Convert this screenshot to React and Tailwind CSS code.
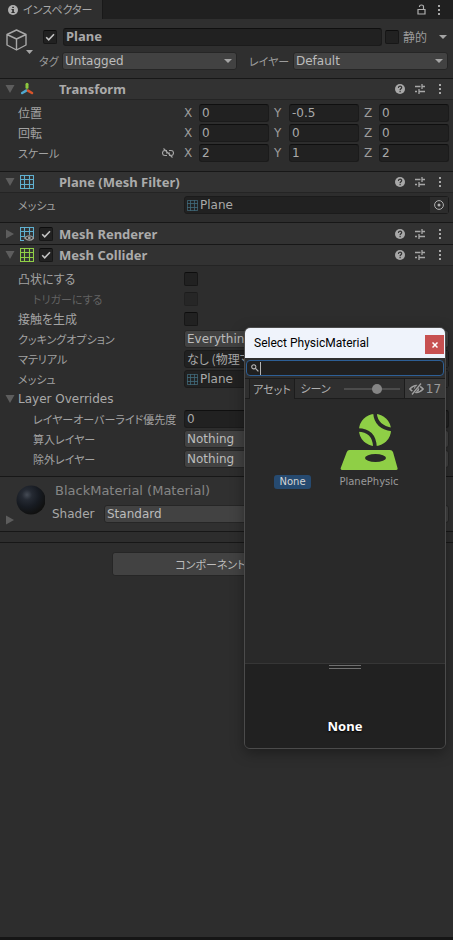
import React from 'react';

const FONT = "font-['DejaVu_Sans','Noto_Sans_CJK_JP',sans-serif]";
const BOLD = "font-['Noto_Sans','Noto_Sans_CJK_JP',sans-serif] text-[13px] font-bold";
const JP = "font-['Noto_Sans_CJK_JP',sans-serif] [font-feature-settings:'palt']";
const FIELD = 'h-[18px] min-w-0 rounded-[3px] border border-[#1b1b1b] border-t-[#0f0f0f] bg-[#212121] text-[#a9a9a9] outline-none';

function Triangle({ right = false, small = false, className = '' }) {
  if (small) {
    return (
      <svg viewBox="0 0 8 4" className={`h-1 w-2 shrink-0 ${className}`} aria-hidden="true">
        <path d="M0 0h8L4 4z" fill="#a5a5a5" />
      </svg>
    );
  }
  return (
    <svg viewBox="0 0 10 10" className={`h-[10px] w-[10px] shrink-0 ${className}`} aria-hidden="true">
      <path d={right ? 'M1 .5v9L9 5z' : 'M.5 1h9L5 9z'} fill="#5d5d5d" />
    </svg>
  );
}

function Check({ id, label, checked = false, dim = false }) {
  return (
    <span className={`relative block h-[14px] w-[14px] shrink-0 ${dim ? 'opacity-50' : ''}`}>
      <input
        id={id}
        type="checkbox"
        aria-label={label}
        defaultChecked={checked}
        disabled={dim}
        className="peer block h-[14px] w-[14px] appearance-none rounded-[2px] border border-[#171717] border-t-[#0d0d0d] bg-[#212121]"
      />
      <svg viewBox="0 0 14 14" className="pointer-events-none absolute inset-0 hidden h-[14px] w-[14px] peer-checked:block" aria-hidden="true">
        <path d="M3.2 7.3l2.5 2.5 5.3-5.6" fill="none" stroke="#c4c4c4" strokeWidth="1.6" />
      </svg>
    </span>
  );
}

function Select({ id, label, value, className = '' }) {
  return (
    <span className={`relative block min-w-0 ${className}`}>
      <select
        id={id}
        aria-label={label}
        defaultValue={value}
        className="block h-[18px] w-full appearance-none rounded-[3px] border border-[#262626] bg-[#424242] pr-4 pl-[2px] text-[12px] leading-[16px] text-[#bcbcbc] outline-none"
      >
        <option>{value}</option>
      </select>
      <Triangle small className="pointer-events-none absolute top-[7px] right-[5px]" />
    </span>
  );
}

function Dots() {
  return (
    <svg viewBox="0 0 4 12" className="h-3 w-1" aria-hidden="true">
      <path d="M1 1h2v2H1zM1 5h2v2H1zM1 9h2v2H1z" fill="#a8a8a8" />
    </svg>
  );
}

function GridIcon({ color, eye = false, small = false }) {
  return (
    <svg viewBox="0 0 14 14" className={small ? 'h-[11px] w-[11px] shrink-0 opacity-50' : 'h-[14px] w-[14px] shrink-0'} aria-hidden="true">
      <path d="M.5.5h13v13H.5zM4.5 0v14M9.5 0v14M0 4.5h14M0 9.5h14" fill="none" stroke={color} strokeWidth="1.1" />
      {eye && (
        <g>
          <path d="M4 14V10.500Q9.500 5 14 10.500V14z" fill="#323232" />
          <path d="M4.700 11Q9.300 6.500 13.900 11Q9.300 15.500 4.700 11z" fill="#323232" stroke="#a0a0a0" strokeWidth="1.100" />
          <circle cx="9.3" cy="11" r="1.400" fill="#a0a0a0" />
        </g>
      )}
    </svg>
  );
}

function TransformIcon() {
  return (
    <svg viewBox="0 0 14 14" className="h-[14px] w-[14px] shrink-0" aria-hidden="true">
      <path d="M7 2.200v3.300" stroke="#8dc63f" strokeWidth="3" strokeLinecap="round" />
      <path d="M7 6v3" stroke="#5f8f35" strokeWidth="1" />
      <path d="M6.200 8.600L2.200 11" stroke="#4fa8cf" strokeWidth="2.600" strokeLinecap="round" />
      <path d="M8 8.600l4 2.400" stroke="#d8542b" strokeWidth="2.600" strokeLinecap="round" />
    </svg>
  );
}

function Header({ icon, title, open = true, check = false, rule = true }) {
  return (
    <header className={`flex h-[21px] items-center border-[#242424] bg-[#323232] pr-[11px] pl-[5px] ${rule ? 'border-b' : ''}`}>
      <Triangle right={!open} />
      <span className="ml-[5px] flex">{icon}</span>
      <span className="ml-[5px] flex w-5">{check && <Check label={title} checked />}</span>
      <h2 className={`min-w-0 flex-1 truncate leading-5 text-[#ababab] ${BOLD}`}>{title}</h2>
      <button type="button" aria-label="Help" className="flex">
        <svg viewBox="0 0 10 10" className="h-[10px] w-[10px]" aria-hidden="true">
          <circle cx="5" cy="5" r="5" fill="#a8a8a8" />
          <path d="M3.400 3.900c0-2.400 3.300-2.300 3.300-.3C6.700 4.900 5.100 4.800 5.100 6.200M5.100 7v1.200" fill="none" stroke="#323232" strokeWidth="1.200" />
        </svg>
      </button>
      <button type="button" aria-label="Presets" className="ml-[10px] flex">
        <svg viewBox="0 0 10 10" className="h-[10px] w-[10px]" aria-hidden="true">
          <path d="M0 2.500h5.500M7 2.500h3M7 0v5M0 7.500h2M4 7.500h6M4 5v5" fill="none" stroke="#a8a8a8" strokeWidth="1.300" />
        </svg>
      </button>
      <button type="button" aria-label="Menu" className="ml-[13px] flex"><Dots /></button>
    </header>
  );
}

function Row({ id, label, kana = false, indent = false, dim = false, extra, children }) {
  return (
    <div className="flex h-5 items-center pr-1">
      <span className={`flex w-[184px] shrink-0 items-center justify-between ${extra ? 'pr-[10px]' : ''} ${indent ? 'pl-[33px]' : 'pl-[18px]'}`}>
        <label htmlFor={id} className={`${JP} ${kana ? 'text-[11px]' : 'text-[12px]'} leading-5 whitespace-nowrap ${dim ? 'text-[#626262]' : 'text-[#a3a3a3]'}`}>{label}</label>
        {extra}
      </span>
      <div className="flex min-w-0 flex-1 items-center gap-[5px]">{children}</div>
    </div>
  );
}

function Vector({ name, values }) {
  return ['X', 'Y', 'Z'].map((axis, i) => (
    <label key={axis} className="flex min-w-0 flex-1 items-center text-[12px] text-[#9c9c9c]">
      <span className="w-[15px] shrink-0">{axis}</span>
      <input id={i === 0 ? name : undefined} defaultValue={values[i]} className={`${FIELD} w-full flex-1 px-[2px] text-[12px]`} />
    </label>
  ));
}

function ObjectField({ id, value, icon = true }) {
  return (
    <span className={`flex min-w-0 flex-1 items-center rounded-[3px] border border-[#1b1b1b] bg-[#212121] ${icon ? 'pl-[2px]' : ''}`}>
      {icon && <GridIcon color="#5fb0d0" small />}
      <input id={id} readOnly defaultValue={value} className={`h-4 w-full min-w-0 flex-1 bg-transparent text-[12px] text-[#a9a9a9] outline-none pl-[2px] ${icon ? '' : JP}`} />
      <button type="button" aria-label="Pick object" className="flex h-4 w-[18px] shrink-0 items-center justify-center bg-[#2c2c2c]">
        <svg viewBox="0 0 10 10" className="h-[10px] w-[10px]" aria-hidden="true">
          <circle cx="5" cy="5" r="4.400" fill="none" stroke="#b0b0b0" />
          <circle cx="5" cy="5" r="1.500" fill="#b0b0b0" />
        </svg>
      </button>
    </span>
  );
}

function Picker() {
  return (
    <section role="dialog" aria-label="Select PhysicMaterial" className="absolute top-[327px] left-[244px] flex h-[422px] w-[202px] flex-col overflow-hidden rounded-[6px] border border-[#4b4b4b] bg-[#292929] shadow-[0_4px_14px_rgba(0,0,0,0.35)]">
      <div className="flex h-[30px] shrink-0 items-center bg-[#eff3fb] pr-px pl-[9px]">
        <h2 className="flex-1 font-['Roboto',sans-serif] text-[12px] whitespace-nowrap text-black">Select PhysicMaterial</h2>
        <button type="button" aria-label="Close" className="mt-[3px] flex h-[19px] w-[19px] items-center justify-center bg-[#c75050]">
          <svg viewBox="0 0 6 6" className="h-[6px] w-[6px]" aria-hidden="true">
            <path d="M.5.5l5 5M5.500.5l-5 5" stroke="#fff" strokeWidth="1.500" />
          </svg>
        </button>
      </div>
      <div className="h-5 shrink-0 bg-[#2f2f2f] px-[1px] pt-[2px]">
        <div className="flex h-4 items-center rounded-[4px] border border-[#2d5f96] bg-[#202020] pl-1">
          <svg viewBox="0 0 8 8" className="h-2 w-2 shrink-0" aria-hidden="true">
            <circle cx="2.800" cy="2.800" r="2.100" fill="none" stroke="#b5b5b5" strokeWidth="1.100" />
            <path d="M4.400 4.400L7.400 7.400" stroke="#b5b5b5" strokeWidth="1.300" />
          </svg>
          <span className="ml-[1px] h-[13px] w-px bg-[#b5b5b5]" />
          <input type="text" aria-label="Search" className="h-[14px] w-full min-w-0 flex-1 bg-transparent text-[12px] text-[#b5b5b5] outline-none" />
        </div>
      </div>
      <div className="flex h-[21px] shrink-0 border-y border-[#1c1c1c] bg-[#2f2f2f] pl-1 text-[#b0b0b0]">
        <button type="button" className={`-mb-px w-[46px] border-x border-[#1c1c1c] bg-[#292929] text-center text-[11px] whitespace-nowrap ${JP}`}>アセット</button>
        <button type="button" className={`w-[41px] text-center text-[11px] whitespace-nowrap ${JP}`}>シーン</button>
        <span className="flex flex-1 items-center pl-2">
          <input
            type="range"
            aria-label="Thumbnail size"
            defaultValue="60"
            className="h-[11px] w-[56px] appearance-none bg-transparent [&::-webkit-slider-runnable-track]:h-[2px] [&::-webkit-slider-runnable-track]:bg-[#4c4c4c] [&::-webkit-slider-thumb]:-mt-[4px] [&::-webkit-slider-thumb]:h-[10px] [&::-webkit-slider-thumb]:w-[10px] [&::-webkit-slider-thumb]:appearance-none [&::-webkit-slider-thumb]:rounded-full [&::-webkit-slider-thumb]:bg-[#858585]"
          />
        </span>
        <button type="button" className="flex w-[41px] items-center justify-center gap-[2px] border-l border-[#1c1c1c] bg-[#3a3a3a] text-[12px] text-[#9b9b9b]">
          <svg viewBox="0 0 15 12" className="h-3 w-[15px]" aria-hidden="true">
            <path d="M.8 6Q7.500-1 14.200 6Q7.500 13 .8 6z" fill="none" stroke="#a0a0a0" strokeWidth="1.400" />
            <circle cx="7.500" cy="6" r="2.700" fill="#a0a0a0" />
            <path d="M2.500 11.500L11.500.5" stroke="#3a3a3a" strokeWidth="3" />
            <path d="M3 11.500L12 .5" stroke="#a0a0a0" strokeWidth="1.300" />
          </svg>
          17
        </button>
      </div>
      <div className="flex flex-1 items-start pt-[14px] pl-[29px] text-[10px] leading-[14px]">
        <button type="button" className="mt-[62px] w-[37px] rounded-[3px] bg-[#264a70] text-center text-[#d5d5d5]">None</button>
        <button type="button" className="ml-[24px] flex w-[68px] flex-col items-center text-[#9a9a9a]">
          <svg viewBox="0 0 58 58" className="h-[58px] w-[58px]" aria-hidden="true">
            <circle cx="35" cy="17" r="16" fill="#8fcf46" />
            <path d="M35 0Q36 14 52 16.500M18 17Q34 17 35 34" fill="none" stroke="#292929" strokeWidth="3.600" />
            <path d="M9.500 37h40.500q2 0 3 2l4.500 16q.6 2-1.500 2H2.500q-2.500 0-1.700-2.300L6.800 39q.8-2 2.700-2z" fill="#8fcf46" />
            <ellipse cx="35.500" cy="45" rx="10.500" ry="4" fill="#292929" />
          </svg>
          <span className="mt-1">PlanePhysic</span>
        </button>
      </div>
      <div className="flex h-[85px] shrink-0 flex-col items-center border-t border-[#363636] bg-[#212121]">
        <span className="mt-[1px] h-1 w-8 border-y border-[#707070]" />
        <strong className={`mt-[47px] leading-5 text-white [text-shadow:0_1px_2px_#000] ${BOLD}`}>None</strong>
      </div>
    </section>
  );
}

export default function App() {
  return (
    <main className={`relative flex min-h-screen flex-col bg-[#2d2d2d] ${FONT} text-[12px] text-[#a9a9a9]`}>
      <div className="flex h-[19px] items-center bg-[#202020] pr-3">
        <div className="flex h-[19px] w-[103px] items-center gap-[5px] border-r border-[#191919] bg-[#2f2f2f] pl-2">
          <svg viewBox="0 0 10 10" className="h-[10px] w-[10px]" aria-hidden="true">
            <circle cx="5" cy="5" r="5" fill="#b0b0b0" />
            <path d="M4.200 1.700h1.700v1.400H4.200zM3.500 4.100h2.400v3h.8v1H3.400v-1h.8v-2h-.7z" fill="#2f2f2f" />
          </svg>
          <h1 className={`${JP} text-[11px] whitespace-nowrap`}>インスペクター</h1>
        </div>
        <button type="button" aria-label="Lock" className="ml-auto flex">
          <svg viewBox="0 0 9 11" className="h-[11px] w-[9px]" aria-hidden="true">
            <path d="M1 5.500h7v4.500H1zM2.500 3V2.500Q2.500 1 4.500 1t2 1.500v3" fill="none" stroke="#b0b0b0" strokeWidth="1.200" />
          </svg>
        </button>
        <button type="button" aria-label="Tab menu" className="ml-[11px] flex"><Dots /></button>
      </div>

      <section className="flex h-[59px] bg-[#2f2f2f] pt-2 pr-[5px] pl-[6px]">
        <button type="button" aria-label="Icon" className="mt-[2px] h-[26px] w-[28px] shrink-0">
          <svg viewBox="0 0 28 26" className="h-[26px] w-[28px]" aria-hidden="true">
            <path d="M10.500 1l9.500 4.500v10.500l-9.500 5-9.500-5V5.500zM1 5.500l9.500 4.500 9.500-4.500M10.500 10v11" fill="none" stroke="#a8a8a8" strokeWidth="1.400" strokeLinejoin="round" />
            <path d="M20 21h7l-3.500 4z" fill="#a5a5a5" />
          </svg>
        </button>
        <div className="min-w-0 flex-1">
          <div className="flex h-5 items-center">
            <span className="ml-[9px]"><Check label="Active" checked /></span>
            <input aria-label="Name" defaultValue="Plane" className={`${FIELD} ml-[6px] flex-1 px-[2px] ${BOLD}`} />
            <span className="ml-[3px]"><Check id="static" /></span>
            <label htmlFor="static" className={`${JP} ml-1 w-9 text-[12px] text-[#9c9c9c]`}>静的</label>
            <button type="button" aria-label="Static flags" className="flex pr-px"><Triangle small /></button>
          </div>
          <div className="mt-1 flex h-5 items-center text-[#9c9c9c]">
            <label htmlFor="tag" className={`${JP} w-7 shrink-0 pl-[5px] text-[11px] whitespace-nowrap`}>タグ</label>
            <Select id="tag" value="Untagged" className="flex-[175]" />
            <label htmlFor="layer" className={`${JP} w-[56px] shrink-0 pl-3 text-[11px] whitespace-nowrap`}>レイヤー</label>
            <Select id="layer" value="Default" className="flex-[155]" />
          </div>
        </div>
      </section>

      <section className="border-t border-[#171717]">
        <Header title="Transform" icon={<TransformIcon />} />
        <div className="pt-[3px] pb-2">
          <Row id="pos" label="位置"><Vector name="pos" values={['0', '-0.5', '0']} /></Row>
          <Row id="rot" label="回転"><Vector name="rot" values={['0', '0', '0']} /></Row>
          <Row
            id="scale"
            label="スケール"
            kana
            extra={
              <svg viewBox="0 0 12 10" className="h-[10px] w-3" aria-hidden="true">
                <path d="M5 2.500H3a2.500 2.500 0 0 0 0 5h2M7 2.500h2a2.500 2.500 0 0 1 0 5H7M4 5h4M1.500.5l9 9" fill="none" stroke="#a5a5a5" strokeWidth="1.100" />
              </svg>
            }
          >
            <Vector name="scale" values={['2', '1', '2']} />
          </Row>
        </div>
      </section>

      <section className="border-t border-[#171717]">
        <Header title="Plane (Mesh Filter)" icon={<GridIcon color="#5fb0d0" />} />
        <div className="pt-[2px] pb-[7px]">
          <Row id="mesh" label="メッシュ" kana><ObjectField id="mesh" value="Plane" /></Row>
        </div>
      </section>

      <section className="border-t border-[#171717]">
        <Header title="Mesh Renderer" open={false} check rule={false} icon={<GridIcon color="#5fb0d0" eye />} />
      </section>

      <section className="border-t border-[#171717]">
        <Header title="Mesh Collider" check icon={<GridIcon color="#8fcf46" />} />
        <div className="pt-[3px] pb-[7px]">
          <Row id="convex" label="凸状にする"><Check id="convex" /></Row>
          <Row id="trigger" label="トリガーにする" kana indent dim><Check id="trigger" dim /></Row>
          <Row id="contacts" label="接触を生成"><Check id="contacts" /></Row>
          <Row id="cooking" label="クッキングオプション" kana><Select id="cooking" value="Everything" className="flex-1" /></Row>
          <Row id="material" label="マテリアル" kana><ObjectField id="material" value="なし (物理マテリアル)" icon={false} /></Row>
          <Row id="collider-mesh" label="メッシュ" kana><ObjectField id="collider-mesh" value="Plane" /></Row>
          <button type="button" className="flex h-5 items-center gap-[3px] pl-[5px] text-[12px]"><Triangle />Layer Overrides</button>
          <Row id="priority" label="レイヤーオーバーライド優先度" kana indent><input id="priority" defaultValue="0" className={`${FIELD} flex-1 px-[2px] text-[12px]`} /></Row>
          <Row id="include" label="算入レイヤー" kana indent><Select id="include" value="Nothing" className="flex-1" /></Row>
          <Row id="exclude" label="除外レイヤー" kana indent><Select id="exclude" value="Nothing" className="flex-1" /></Row>
        </div>
      </section>

      <section className="flex h-[56px] border-y border-[#171717] bg-[#303030] pr-1 pl-[5px]">
        <button type="button" aria-label="Expand material" className="mt-[38px] flex h-[10px]"><Triangle right /></button>
        <svg viewBox="0 0 30 30" className="mt-2 h-[30px] w-[30px] shrink-0" aria-hidden="true">
          <defs>
            <radialGradient id="ball" cx="0.36" cy="0.32" r="0.7">
              <stop offset="0" stopColor="#454b55" />
              <stop offset="0.25" stopColor="#252a33" />
              <stop offset="0.6" stopColor="#171b22" />
              <stop offset="1" stopColor="#10100f" />
            </radialGradient>
          </defs>
          <circle cx="16" cy="15" r="14.500" fill="url(#ball)" />
        </svg>
        <div className="min-w-0 flex-1 pt-1">
          <div className="flex h-5 items-center justify-between pr-[3px] pl-[10px] text-[13px] text-[#868686]">
            BlackMaterial (Material)
            <button type="button" aria-label="Material menu" className="flex"><Dots /></button>
          </div>
          <div className="mt-[2px] flex h-[22px] items-center pl-[7px]">
            <label htmlFor="shader" className="w-[52px] shrink-0">Shader</label>
            <Select id="shader" value="Standard" className="flex-1" />
          </div>
        </div>
      </section>

      <div className="mt-[10px] flex justify-center border-t border-[#171717] px-4 pt-[9px]">
        <button type="button" className={`${JP} h-6 w-[230px] rounded-[3px] border border-[#262626] bg-[#424242] text-[11px] text-[#bcbcbc]`}>コンポーネントを追加</button>
      </div>

      <div className="mt-auto h-[3px] bg-[#151515]" />

      <Picker />
    </main>
  );
}
